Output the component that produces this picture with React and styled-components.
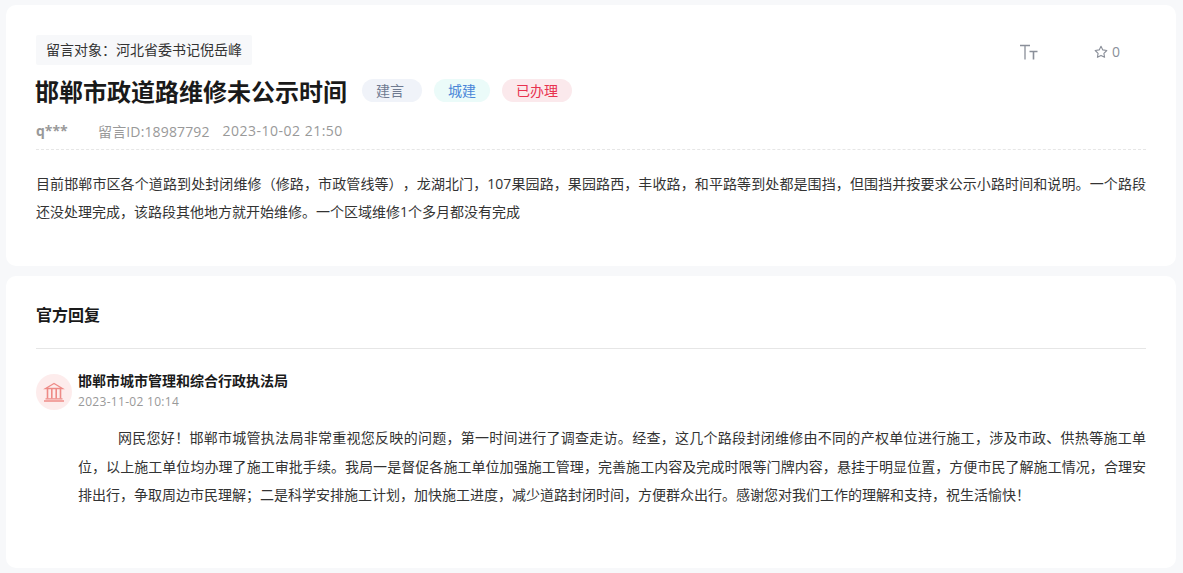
import React from "react";
import styled, { createGlobalStyle } from "styled-components";

const GlobalStyle = createGlobalStyle`
  html, body {
    margin: 0;
    padding: 0;
    background: #f7f8fa;
    font-family: "Open Sans", "Noto Sans CJK SC", sans-serif;
    text-spacing-trim: space-all;
  }
  * {
    box-sizing: border-box;
  }
`;

const Page = styled.div`
  width: 1183px;
  height: 573px;
  overflow: hidden;
  padding: 5px 7px 5px 6px;
  display: flex;
  flex-direction: column;
  gap: 10px;
`;

const Card = styled.section`
  background: #fff;
  border-radius: 10px;
  padding: ${(p) => p.$padding};
  height: ${(p) => p.$height}px;
`;

const TopRow = styled.div`
  display: flex;
  justify-content: space-between;
  align-items: flex-start;
`;

const Target = styled.div`
  display: inline-block;
  height: 30px;
  line-height: 30px;
  padding: 0 10px;
  font-size: 14px;
  color: #333;
  background: #f7f8fa;
  border-radius: 2px;
`;

const Tools = styled.div`
  display: flex;
  align-items: center;
  gap: 56px;
  padding: 7px 26px 0 0;
  color: #8a8f99;
  font-size: 14px;
`;

const Fav = styled.span`
  display: flex;
  align-items: center;
  gap: 4px;
`;

const TitleRow = styled.div`
  display: flex;
  align-items: center;
  margin-top: 7px;
  height: 36px;
`;

const Title = styled.h1`
  margin: 0 15px 0 -1px;
  font-size: 24px;
  font-weight: 700;
  color: #1a1a1a;
`;

const Badge = styled.span`
  height: 23px;
  line-height: 23px;
  padding: 0 ${(p) => p.$right || 14}px 0 14px;
  margin-right: 12px;
  border-radius: 12px;
  font-size: 14px;
  color: ${(p) => p.$color};
  background: ${(p) => p.$bg};
`;

const Meta = styled.div`
  display: flex;
  align-items: center;
  margin-top: 10px;
  height: 26px;
  padding-bottom: 1px;
  font-size: 14px;
  color: #999;
`;

const Author = styled.b`
  font-weight: 700;
  width: 62px;
`;

const MetaItem = styled.span`
  margin-right: 13px;
  letter-spacing: ${(p) => p.$spacing};
`;

const DashedLine = styled.div`
  margin-top: 5px;
  border-top: 1px dashed #e6e6e6;
`;

const Content = styled.p`
  margin: 20px 0 0;
  font-size: 14px;
  line-height: 28px;
  color: #333;
  text-align: justify;
`;

const ReplyHeading = styled.h2`
  margin: 0;
  height: 46px;
  font-size: 16px;
  line-height: 24px;
  font-weight: 700;
  color: #1a1a1a;
  border-bottom: 1px solid #e6e6e6;
`;

const Office = styled.div`
  display: flex;
  align-items: center;
  gap: 6px;
  margin-top: 22px;
`;

const OfficeIcon = styled.div`
  width: 36px;
  height: 36px;
  border-radius: 50%;
  background: #fdecec;
  display: flex;
  align-items: center;
  justify-content: center;
`;

const OfficeText = styled.div`
  display: flex;
  flex-direction: column;
  gap: 3px;
  padding-bottom: 2px;
`;

const OfficeName = styled.div`
  font-size: 14px;
  line-height: 19px;
  font-weight: 700;
  color: #1a1a1a;
`;

const OfficeDate = styled.div`
  font-size: 12px;
  line-height: 17px;
  letter-spacing: 0.025em;
  color: #999;
`;

const ReplyBody = styled.p`
  margin: 12px 0 0 42px;
  font-size: 14px;
  line-height: 28.5px;
  color: #333;
  text-indent: 40px;
  text-align: justify;
`;

function TextSizeIcon() {
  return (
    <svg width="18" height="16" viewBox="0 0 18 16" fill="none" stroke="#8a8f99">
      <path d="M0 1.5h10M5 1.5V15.5" strokeWidth="1.3" />
      <path d="M9.5 7.5h8M13.5 7.5v8" strokeWidth="1.6" />
    </svg>
  );
}

function StarIcon() {
  return (
    <svg width="14" height="14" viewBox="0 0 14 14" fill="none" stroke="#8a8f99" strokeWidth="1.1" strokeLinejoin="round">
      <path d="M7 1.2l1.8 3.7 4 .6-2.9 2.8.7 4L7 10.4l-3.6 1.9.7-4L1.2 5.5l4-.6z" />
    </svg>
  );
}

function BankIcon() {
  return (
    <svg width="22" height="20" viewBox="0 0 22 20" fill="none" stroke="#ee8a86" strokeWidth="1.3">
      <path d="M11 1.5L2.5 6.5h17z" />
      <path d="M4.5 7v9.5M8.8 7v9.5M13.2 7v9.5M17.5 7v9.5" strokeWidth="1.6" />
      <path d="M2.5 16.8h17M1 19h20" />
    </svg>
  );
}

export default function App() {
  return (
    <Page>
      <GlobalStyle />
      <Card $padding="30px" $height={261}>
        <TopRow>
          <Target>留言对象：河北省委书记倪岳峰</Target>
          <Tools>
            <TextSizeIcon />
            <Fav>
              <StarIcon /> 0
            </Fav>
          </Tools>
        </TopRow>
        <TitleRow>
          <Title>邯郸市政道路维修未公示时间</Title>
          <Badge $color="#6f7a91" $bg="#f0f3f9" $right={18}>建言</Badge>
          <Badge $color="#4a86d8" $bg="#ebfbf9">城建</Badge>
          <Badge $color="#e8324f" $bg="#fbe9ec">已办理</Badge>
        </TitleRow>
        <Meta>
          <Author>q***</Author>
          <MetaItem $spacing="0.01em">留言ID:18987792</MetaItem>
          <MetaItem $spacing="0.035em">2023-10-02 21:50</MetaItem>
        </Meta>
        <DashedLine />
        <Content>
          目前邯郸市区各个道路到处封闭维修（修路，市政管线等），龙湖北门，107果园路，果园路西，丰收路，和平路等到处都是围挡，但围挡并按要求公示小路时间和说明。一个路段还没处理完成，该路段其他地方就开始维修。一个区域维修1个多月都没有完成
        </Content>
      </Card>
      <Card $padding="27px 30px 0" $height={292}>
        <ReplyHeading>官方回复</ReplyHeading>
        <Office>
          <OfficeIcon>
            <BankIcon />
          </OfficeIcon>
          <OfficeText>
            <OfficeName>邯郸市城市管理和综合行政执法局</OfficeName>
            <OfficeDate>2023-11-02 10:14</OfficeDate>
          </OfficeText>
        </Office>
        <ReplyBody>
          网民您好！邯郸市城管执法局非常重视您反映的问题，第一时间进行了调查走访。经查，这几个路段封闭维修由不同的产权单位进行施工，涉及市政、供热等施工单位，以上施工单位均办理了施工审批手续。我局一是督促各施工单位加强施工管理，完善施工内容及完成时限等门牌内容，悬挂于明显位置，方便市民了解施工情况，合理安排出行，争取周边市民理解；二是科学安排施工计划，加快施工进度，减少道路封闭时间，方便群众出行。感谢您对我们工作的理解和支持，祝生活愉快！
        </ReplyBody>
      </Card>
    </Page>
  );
}
